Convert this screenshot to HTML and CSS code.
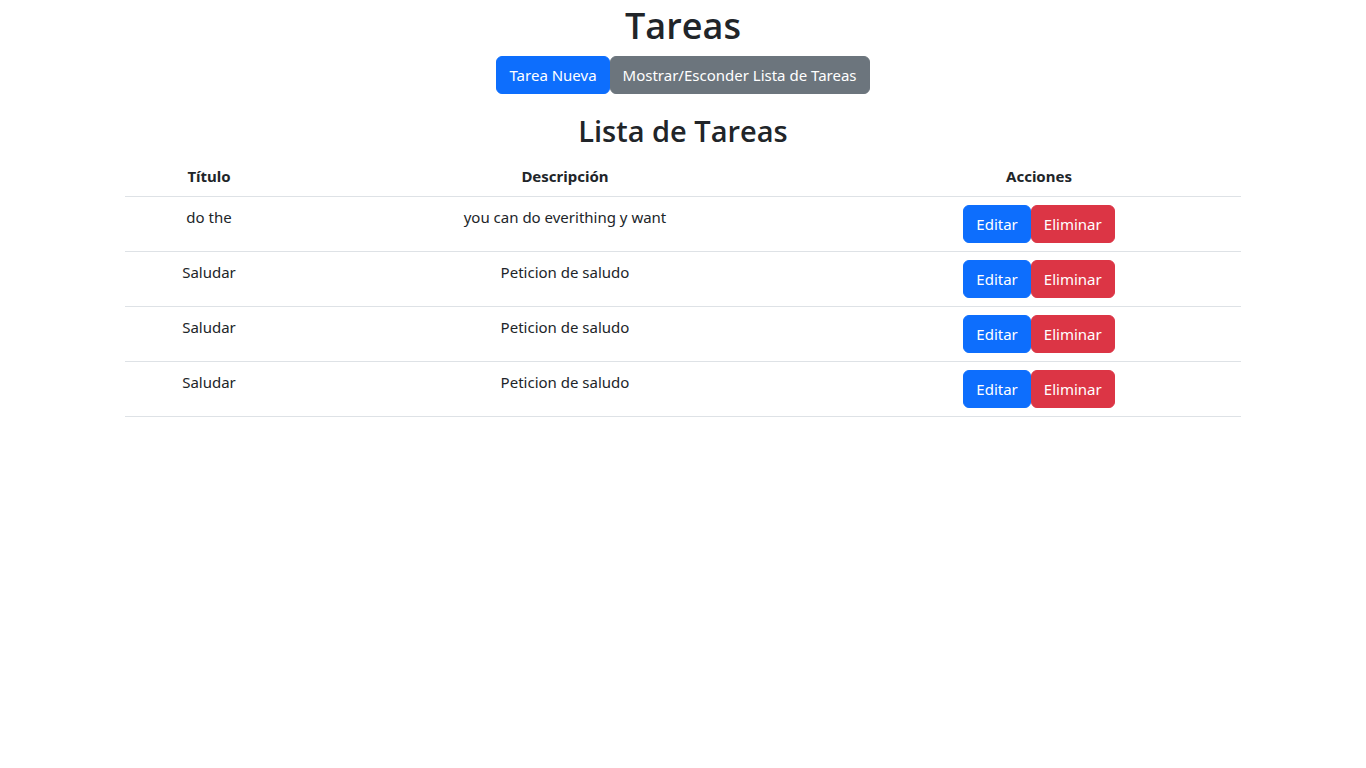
FILE: index.html
```html
<!DOCTYPE html>
<html lang="es">
<head>
<meta charset="utf-8">
<title>Tareas</title>
<link rel="stylesheet" href="styles.css">
</head>
<body>
<div class="container">
  <h1 class="title">Tareas</h1>
  <div class="toolbar">
    <button class="btn btn-primary">Tarea Nueva</button><button class="btn btn-secondary">Mostrar/Esconder Lista de Tareas</button>
  </div>
  <h2 class="subtitle">Lista de Tareas</h2>
  <table class="table">
    <colgroup>
      <col class="c1"><col class="c2"><col class="c3">
    </colgroup>
    <thead>
      <tr><th>Título</th><th>Descripción</th><th>Acciones</th></tr>
    </thead>
    <tbody>
      <tr><td>do the</td><td>you can do everithing y want</td><td><div class="actions"><button class="btn btn-primary">Editar</button><button class="btn btn-danger">Eliminar</button></div></td></tr>
      <tr><td>Saludar</td><td>Peticion de saludo</td><td><div class="actions"><button class="btn btn-primary">Editar</button><button class="btn btn-danger">Eliminar</button></div></td></tr>
      <tr><td>Saludar</td><td>Peticion de saludo</td><td><div class="actions"><button class="btn btn-primary">Editar</button><button class="btn btn-danger">Eliminar</button></div></td></tr>
      <tr><td>Saludar</td><td>Peticion de saludo</td><td><div class="actions"><button class="btn btn-primary">Editar</button><button class="btn btn-danger">Eliminar</button></div></td></tr>
    </tbody>
  </table>
</div>
</body>
</html>
```
FILE: styles.css
```css
* { box-sizing: border-box; }
html, body { margin: 0; padding: 0; background: #fff; }
body {
  font-family: "Noto Sans", "Open Sans", sans-serif;
  font-size: 15px;
  line-height: 24px;
  color: #212529;
}
.container {
  max-width: 1140px;
  margin: 0 auto;
  padding: 0 12px;
}
.title {
  margin: 2px 0 6px;
  font-family: "Open Sans", "Noto Sans", sans-serif;
  font-size: 36px;
  line-height: 48px;
  font-weight: 600;
  text-align: center;
}
.toolbar {
  display: flex;
  justify-content: center;
}
.subtitle {
  margin: 18px 0 6px;
  font-family: "Open Sans", "Noto Sans", sans-serif;
  font-size: 29px;
  line-height: 38px;
  font-weight: 600;
  text-align: center;
}
.btn {
  font-family: inherit;
  font-size: 15px;
  line-height: 24px;
  padding: 6px 12px;
  border: 1px solid transparent;
  border-radius: 6px;
  color: #fff;
  cursor: pointer;
  margin: 0;
}
.btn-primary { background: #0d6efd; border-color: #0d6efd; }
.btn-secondary { background: #6c757d; border-color: #6c757d; }
.btn-danger { background: #dc3545; border-color: #dc3545; }
.table {
  width: 100%;
  border-collapse: collapse;
  table-layout: fixed;
}
.c1 { width: 168px; }
.c2 { width: 544px; }
.c3 { width: 404px; }
.table th, .table td {
  padding: 8px;
  text-align: center;
  vertical-align: top;
  border-bottom: 1px solid #dee2e6;
}
.table th { font-weight: 700; }
.actions {
  display: flex;
  justify-content: center;
}
```
